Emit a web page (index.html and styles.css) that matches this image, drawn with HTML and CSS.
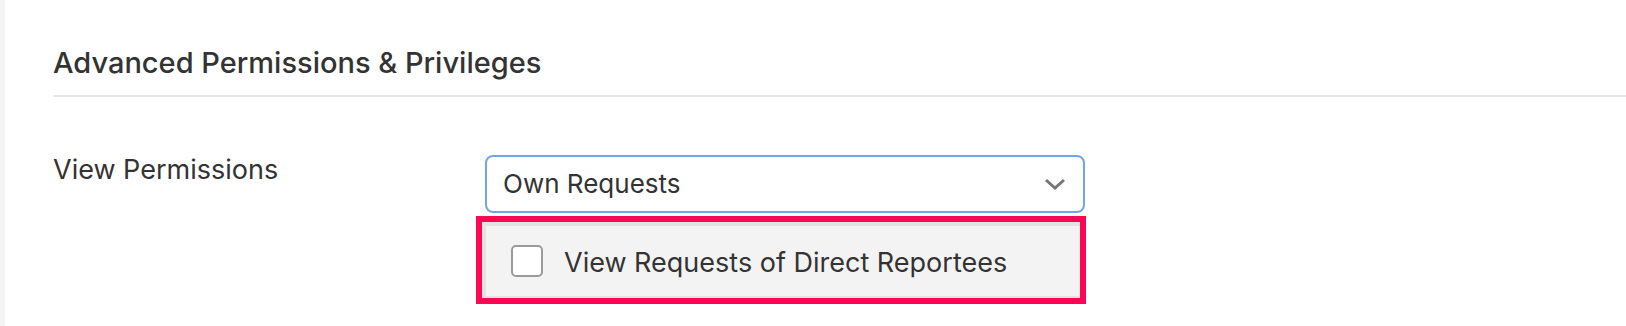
FILE: index.html
```html
<!DOCTYPE html>
<html lang="en">
<head>
  <meta charset="UTF-8">
  <meta name="viewport" content="width=device-width, initial-scale=1.0">
  <title>Advanced Permissions</title>
  <link rel="stylesheet" href="styles.css">
</head>
<body>
  <div class="side-strip"></div>

  <main class="content">
    <!-- Section title -->
    <h2 class="section-title">Advanced Permissions &amp; Privileges</h2>

    <!-- View permissions row -->
    <div class="field-row">
      <label class="field-label">View Permissions</label>
      <div class="field-control">
        <div class="select-box">
          <span class="select-value">Own Requests</span>
          <svg class="chevron" width="22" height="12" viewBox="0 0 22 12">
            <polyline points="2,2 11,10 20,2" fill="none" stroke="#777" stroke-width="3"/>
          </svg>
        </div>
        <div class="option-highlight">
          <div class="option-panel">
            <span class="checkbox"></span>
            <span class="option-text">View Requests of Direct Reportees</span>
          </div>
        </div>
      </div>
    </div>
  </main>
</body>
</html>
```

FILE: styles.css
```css
/* General */
body {
  margin: 0;
  display: flex;
  min-height: 100vh;
  background: #fff;
  color: #333;
  font-family: Inter, "Noto Sans", sans-serif;
}

.side-strip {
  width: 5px;
  background: #f4f4f4;
}

.content {
  flex: 1;
  padding: 43px 0 0 48px;
}

/* Section title */
.section-title {
  margin: 0;
  font-size: 29px;
  line-height: 40px;
  font-weight: 500;
  padding-bottom: 12px;
  border-bottom: 2px solid #e6e6e6;
}

/* Field row */
.field-row {
  display: grid;
  grid-template-columns: 432px 600px;
  margin-top: 58px;
}

.field-label {
  font-size: 27px;
  line-height: 30px;
}

/* Select */
.select-box {
  display: flex;
  align-items: center;
  justify-content: space-between;
  border: 2px solid #73a3ec;
  border-radius: 8px;
  padding: 9px 17px 9px 16px;
  font-size: 26px;
  line-height: 36px;
}

/* Dropdown option with red annotation box */
.option-highlight {
  margin: 3px -1px 0 -9px;
  border: 6px solid #fd0653;
}

.option-panel {
  display: flex;
  align-items: center;
  height: 70px;
  background: #f3f3f3;
  border-top: 4px solid #e4e4e4;
  border-left: 4px solid #e4e4e4;
  border-bottom: 2px solid #e4e4e4;
}

.checkbox {
  width: 28px;
  height: 28px;
  margin-left: 25px;
  border: 2px solid #9a9a9a;
  border-radius: 5px;
  background: #fff;
}

.option-text {
  margin-left: 21px;
  padding-top: 3px;
  font-size: 27px;
  line-height: 36px;
}
```
